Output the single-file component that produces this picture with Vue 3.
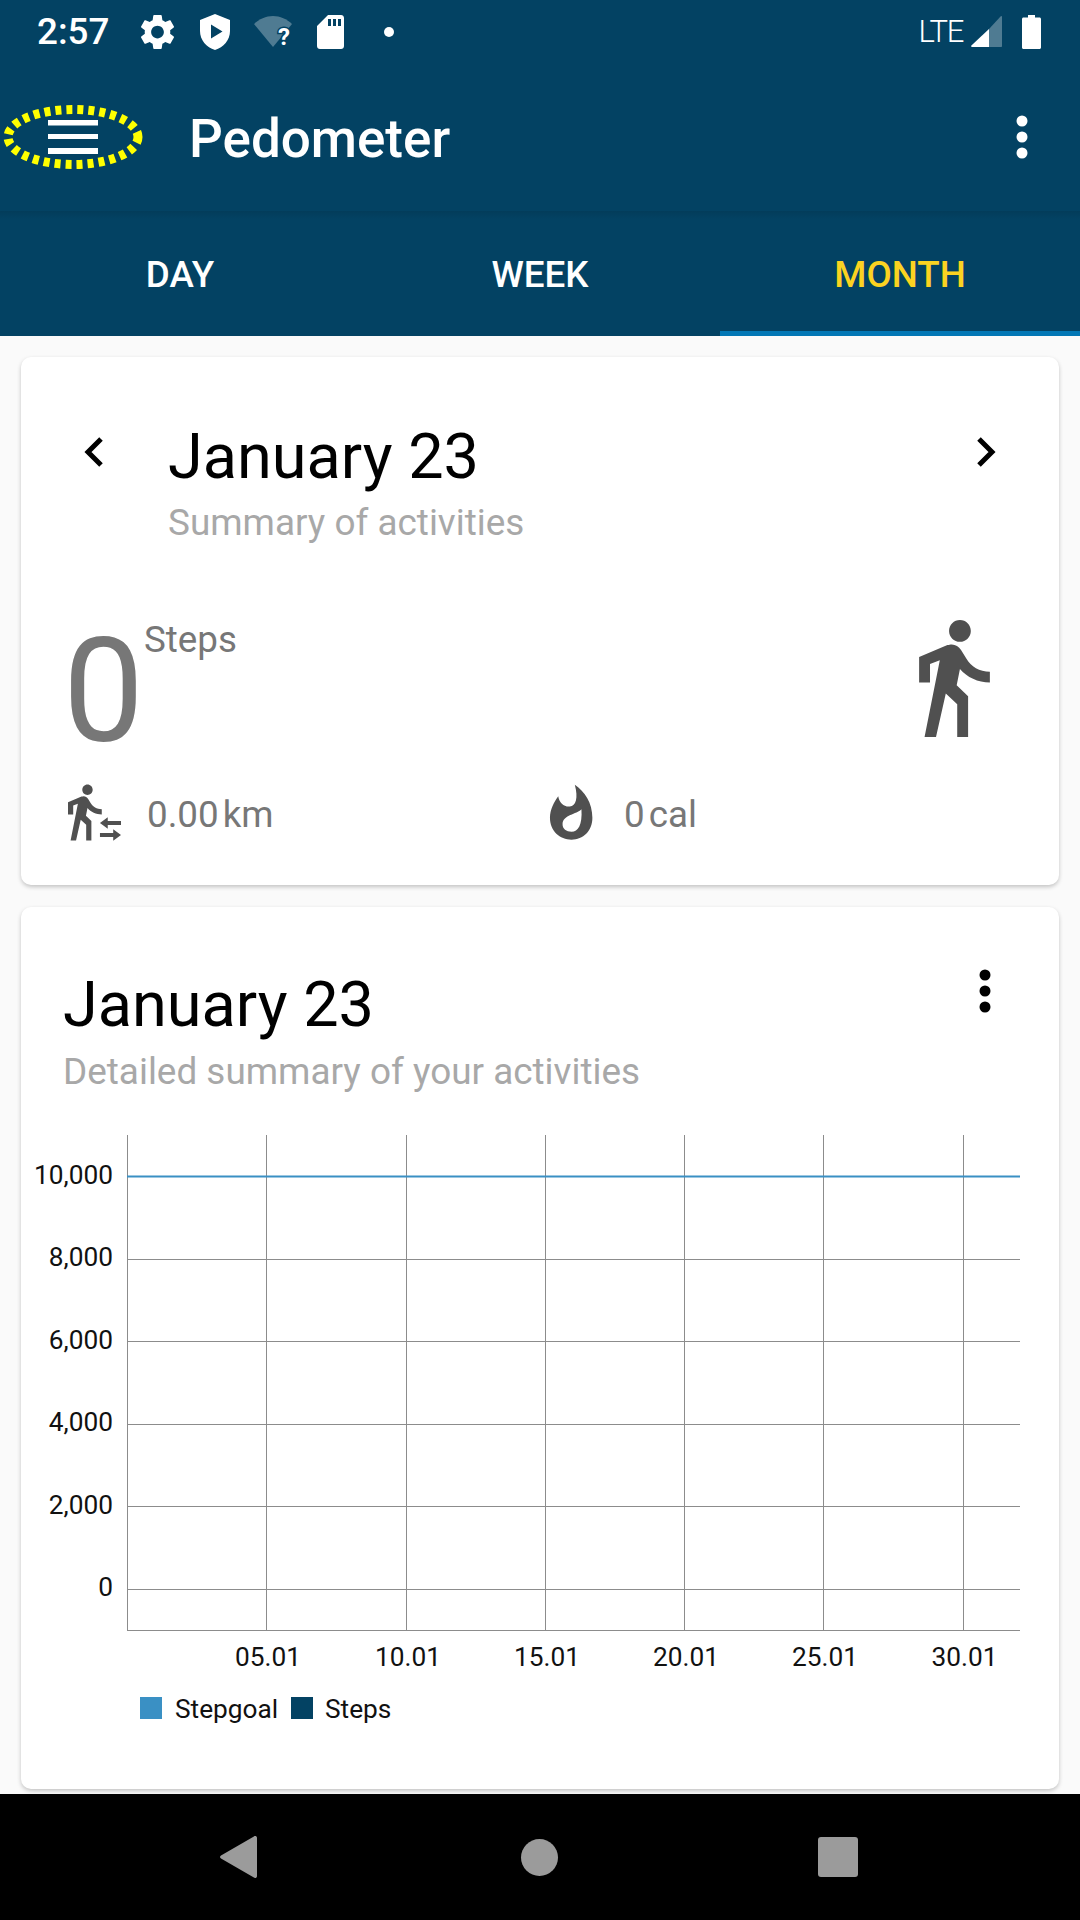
<script setup>
const tabs = [
  { label: 'DAY', active: false },
  { label: 'WEEK', active: false },
  { label: 'MONTH', active: true },
]

const gridX = [266.5, 406.5, 545.5, 684.5, 823.5, 963]
const gridY = [1259, 1341, 1424, 1506, 1589]
const yLabels = [
  { text: '10,000', y: 1184 },
  { text: '8,000', y: 1266 },
  { text: '6,000', y: 1349 },
  { text: '4,000', y: 1431 },
  { text: '2,000', y: 1514 },
  { text: '0', y: 1596 },
]
const xLabels = ['05.01', '10.01', '15.01', '20.01', '25.01', '30.01']

// chart svg starts at y=1125 on the page and x=21 (card left)
const ox = 21
const oy = 1125

const walk = 'M13.5 5.5c1.1 0 2-.9 2-2s-.9-2-2-2-2 .9-2 2 .9 2 2 2zM9.8 8.9L7 23h2.1l1.8-8 2.1 2v6h2v-7.5l-2.1-2 .6-3C14.8 12 16.8 13 19 13v-2c-1.9 0-3.5-1-4.3-2.4l-1-1.6c-.4-.6-1-1-1.7-1-.3 0-.5.1-.8.1L6 8.3V13h2V9.6l1.8-.7'
</script>

<template>
  <div class="screen">
    <header class="appbar">
      <div class="status">
        <span class="time">2:57</span>
        <svg class="st-gear" viewBox="2.7 2.4 18.6 19.2" fill="#fff"><path d="M19.14,12.94c0.04-0.3,0.06-0.61,0.06-0.94c0-0.32-0.02-0.64-0.07-0.94l2.03-1.58c0.18-0.14,0.23-0.41,0.12-0.61 l-1.92-3.32c-0.12-0.22-0.37-0.29-0.59-0.22l-2.39,0.96c-0.5-0.38-1.03-0.7-1.62-0.94L14.4,2.81c-0.04-0.24-0.24-0.41-0.48-0.41 h-3.84c-0.24,0-0.43,0.17-0.47,0.41L9.25,5.35C8.66,5.59,8.12,5.92,7.63,6.29L5.24,5.33c-0.22-0.08-0.47,0-0.59,0.22L2.74,8.87 C2.62,9.08,2.66,9.34,2.86,9.48l2.03,1.58C4.84,11.36,4.8,11.69,4.8,12s0.02,0.64,0.07,0.94l-2.03,1.58 c-0.18,0.14-0.23,0.41-0.12,0.61l1.92,3.32c0.12,0.22,0.37,0.29,0.59,0.22l2.39-0.96c0.5,0.38,1.03,0.7,1.62,0.94l0.36,2.54 c0.05,0.24,0.24,0.41,0.48,0.41h3.84c0.24,0,0.44-0.17,0.47-0.41l0.36-2.54c0.59-0.24,1.13-0.56,1.62-0.94l2.39,0.96 c0.22,0.08,0.47,0,0.59-0.22l1.92-3.32c0.12-0.22,0.07-0.47-0.12-0.61L19.14,12.94z M12,15.6c-1.98,0-3.6-1.62-3.6-3.6 s1.62-3.6,3.6-3.6s3.6,1.62,3.6,3.6S13.98,15.6,12,15.6z" /></svg>
        <svg class="st-shield" viewBox="0 0 30 36"><path fill="#fff" fill-rule="evenodd" d="M15 0L0 6v11c0 9 6.5 16.5 15 19 8.5-2.5 15-10 15-19V6zM11 10.5L22.500 17.500 11 24.500z" /></svg>
        <svg class="st-wifi" viewBox="0 -4 44 40">
          <path fill="#fff" fill-opacity=".3" d="M0 8C5 3 12 0 19 0s14 3 19 8L19 31z" />
          <text x="30" y="29" class="st-q">?</text>
        </svg>
        <svg class="st-sd" viewBox="0 0 27 34"><path fill="#fff" fill-rule="evenodd" d="M11 0h13c1.700 0 3 1.300 3 3v28c0 1.700-1.300 3-3 3H3c-1.700 0-3-1.300-3-3V11zM11 4v7h3V4zM16 4v7h3V4zM21 4v7h3V4z" /></svg>
        <span class="st-dot"></span>
        <span class="st-space"></span>
        <span class="lte">LTE</span>
        <svg class="st-signal" viewBox="0 0 31 31">
          <path fill="#fff" fill-opacity=".3" d="M18 13L30 0c.5 0 1 .4 1 1v29c0 .6-.4 1-1 1H18z" />
          <path fill="#fff" d="M18 13V31H1c-.8 0-1.200-.8-.6-1.400z" />
        </svg>
        <svg class="st-battery" viewBox="0 0 19 34"><path fill="#fff" d="M6 0h7v2.500h4.500c.8 0 1.500.7 1.500 1.500v28.500c0 .8-.7 1.500-1.500 1.500H1.500C.7 34 0 33.300 0 32.500V4c0-.8.7-1.500 1.500-1.500H6z" /></svg>
      </div>

      <div class="toolbar">
        <svg class="menu" viewBox="0 0 140 68">
          <ellipse cx="70" cy="34" rx="65" ry="27.500" fill="none" stroke="#ffff00" stroke-width="9" stroke-dasharray="6 5" />
          <rect x="45" y="17" width="50" height="5.500" fill="#fff" />
          <rect x="45" y="31" width="50" height="5" fill="#fff" />
          <rect x="45" y="45" width="50" height="6" fill="#fff" />
        </svg>
        <h1 class="app-title">Pedometer</h1>
        <svg class="overflow" viewBox="0 0 12 44" fill="#fff">
          <circle cx="6" cy="6" r="5.500" />
          <circle cx="6" cy="22" r="5.500" />
          <circle cx="6" cy="38" r="5.500" />
        </svg>
      </div>

      <nav class="tabs">
        <div v-for="tab in tabs" :key="tab.label" class="tab" :class="{ active: tab.active }">{{ tab.label }}</div>
      </nav>
    </header>

    <main class="content">
      <section class="card card-summary">
        <div class="sum-head">
          <svg class="chev" viewBox="0 0 22 32"><path d="M18 3L5 16l13 13" fill="none" stroke="#000" stroke-width="5" /></svg>
          <div class="sum-titles">
            <div class="title">January 23</div>
            <div class="subtitle">Summary of activities</div>
          </div>
          <svg class="chev" viewBox="0 0 22 32"><path d="M4 3l13 13L4 29" fill="none" stroke="#000" stroke-width="5" /></svg>
        </div>

        <div class="sum-steps">
          <span class="big-num">0</span>
          <span class="steps-label">Steps</span>
          <svg class="walk-big" viewBox="6 1.500 13 21.500"><path :d="walk" fill="#505050" /></svg>
        </div>

        <div class="sum-details">
          <div class="detail detail-km">
            <svg class="walk-small" viewBox="6 1.500 20.400 21.500">
              <path :d="walk" fill="#505050" />
              <path fill="#505050" d="M18.300 16.300L21.300 14.100V15.500H26.400V17.100H21.300V18.500zM26.400 20.900L23.400 18.700V20.100H18.300V21.700H23.400V23.100z" />
            </svg>
            <span class="value">0.00</span><span class="unit">km</span>
          </div>
          <div class="detail detail-cal">
            <svg class="flame" viewBox="85 545 140 175">
              <path fill="#505050" fill-rule="evenodd" d="M165 550C195 570 218 605 218 650C218 690 190 716 155 716C120 716 90 690 90 650C90 625 102 603 115 585C118 605 133 618 150 616C168 614 176 590 165 550ZM185 624C170 640 130 640 128 668C127 684 140 692 155 692C175 692 188 672 185 624Z" />
            </svg>
            <span class="value">0</span><span class="unit">cal</span>
          </div>
        </div>
      </section>

      <section class="card card-chart">
        <div class="chart-head">
          <div>
            <div class="title">January 23</div>
            <div class="subtitle">Detailed summary of your activities</div>
          </div>
          <svg class="chart-more" viewBox="0 0 12 44" fill="#000">
            <circle cx="6" cy="6" r="5.500" />
            <circle cx="6" cy="22" r="5.500" />
            <circle cx="6" cy="38" r="5.500" />
          </svg>
        </div>

        <svg class="chart" width="1038" height="610" :viewBox="`${ox} ${oy} 1038 610`">
          <g stroke="#8c8c8c" stroke-width="1" shape-rendering="crispEdges">
            <line v-for="x in gridX" :key="x" :x1="x" :x2="x" y1="1135" y2="1630" />
            <line v-for="y in gridY" :key="y" x1="127" x2="1020" :y1="y" :y2="y" />
            <line x1="127" x2="127" y1="1135" y2="1630" />
            <line x1="127" x2="1020" y1="1630" y2="1630" />
          </g>
          <line x1="127" x2="1020" y1="1176.500" y2="1176.500" stroke="#3a90c4" stroke-width="2" />
          <text v-for="l in yLabels" :key="l.text" class="axis" x="113" :y="l.y" text-anchor="end">{{ l.text }}</text>
          <text v-for="(l, i) in xLabels" :key="l" class="axis" :x="gridX[i] + 1.500" y="1666" text-anchor="middle">{{ l }}</text>
          <rect x="140" y="1697" width="22" height="22" fill="#3a90c4" />
          <text class="axis" x="175" y="1718">Stepgoal</text>
          <rect x="291" y="1697" width="22" height="22" fill="#034263" />
          <text class="axis" x="325" y="1718">Steps</text>
        </svg>
      </section>
    </main>

    <footer class="navbar">
      <svg class="nav-back" viewBox="0 0 37 42"><path d="M35 0c1 0 2 .6 2 2v38c0 1.400-1 2-2 2-.4 0-.8-.2-1.100-.4L1 22.500c-1.300-.8-1.300-2.200 0-3L33.900.4C34.200.2 34.600 0 35 0z" fill="#9b9b9b" /></svg>
      <span class="nav-home"></span>
      <span class="nav-recent"></span>
    </footer>
  </div>
</template>

<style scoped>
.screen {
  width: 1080px;
  height: 1920px;
  display: flex;
  flex-direction: column;
  background: #fafafa;
  font-family: Roboto, "Liberation Sans", sans-serif;
  overflow: hidden;
}
.appbar {
  height: 336px;
  flex: none;
  background: #034263;
  color: #fff;
}
.status {
  height: 63px;
  display: flex;
  align-items: center;
  padding: 0 39px 0 37px;
}
.time {
  width: 73px;
  font-size: 36.75px;
  font-weight: 500;
  line-height: 63px;
}
.st-gear {
  width: 33px;
  height: 34px;
  margin-left: 31px;
}
.st-shield {
  width: 30px;
  height: 36px;
  margin-left: 26px;
}
.st-wifi {
  width: 44px;
  height: 40px;
  margin: 0 -6px 0 24px;
}
.st-q {
  font-size: 24px;
  font-weight: 700;
  fill: #fff;
  text-anchor: middle;
  stroke: #034263;
  stroke-width: 3px;
  paint-order: stroke;
}
.st-sd {
  width: 27px;
  height: 34px;
  margin-left: 25px;
}
.st-dot {
  width: 10px;
  height: 10px;
  border-radius: 50%;
  background: #fff;
  margin-left: 40px;
}
.st-space {
  flex: 1;
}
.lte {
  font-size: 31px;
  font-weight: 300;
  letter-spacing: -1.3px;
  margin-right: 8px;
}
.st-signal {
  width: 31px;
  height: 31px;
}
.st-battery {
  width: 19px;
  height: 34px;
  margin-left: 20px;
}
.toolbar {
  height: 148px;
  display: flex;
  align-items: center;
  padding: 0 52px 0 3px;
}
.menu {
  width: 140px;
  height: 68px;
  flex: none;
}
.app-title {
  flex: 1;
  margin: 4px 0 0 46px;
  font-size: 53px;
  font-weight: 500;
  line-height: 60px;
}
.overflow {
  width: 12px;
  height: 44px;
}
.tabs {
  height: 125px;
  display: flex;
  background: linear-gradient(#033c5a, #034263 8px);
}
.tab {
  flex: 1;
  display: flex;
  align-items: center;
  justify-content: center;
  padding-top: 6px;
  border-bottom: 5px solid transparent;
  font-size: 36.75px;
  font-weight: 500;
}
.tab.active {
  color: #fbd321;
  border-bottom-color: #0277b5;
}
.content {
  flex: 1;
  display: flex;
  flex-direction: column;
  gap: 22px;
  padding: 21px 21px 0;
}
.card {
  background: #fff;
  border-radius: 10px;
  box-shadow: 0 2px 4px rgba(0, 0, 0, 0.22);
}
.card-summary {
  height: 528px;
  padding: 0 50px 0 44px;
  box-sizing: border-box;
}
.sum-head {
  display: flex;
  align-items: flex-start;
  padding: 64px 12px 0 18px;
}
.chev {
  width: 22px;
  height: 32px;
  margin-top: 15px;
  flex: none;
}
.sum-titles {
  flex: 1;
  margin-left: 63px;
}
.title {
  font-size: 63px;
  line-height: 72px;
  color: #000;
}
.subtitle {
  margin-top: 6px;
  font-size: 36.9px;
  line-height: 50px;
  color: #a8a8a8;
}
.sum-titles .subtitle {
  margin-top: 5px;
}
.sum-steps {
  display: flex;
  align-items: flex-start;
  margin-top: 61px;
  height: 170px;
  margin-left: -2px;
}
.big-num {
  font-size: 144px;
  line-height: 166px;
  color: #777;
}
.steps-label {
  flex: 1;
  font-size: 36.75px;
  line-height: 44px;
  color: #777;
  margin: 9px 0 0 0;
}
.walk-big {
  width: 71px;
  height: 117px;
  margin: 11px 19px 0 0;
}
.sum-details {
  display: flex;
  margin-top: 5px;
  margin-left: 3px;
}
.detail {
  display: flex;
  align-items: center;
  height: 60px;
  font-size: 36.75px;
  color: #777;
}
.detail-km {
  width: 480px;
}
.walk-small {
  width: 53px;
  height: 57px;
  margin: -4px 26px 0 0;
}
.flame {
  width: 47px;
  height: 58px;
  margin: -4px 29px 0 0;
}
.value {
  margin-right: 4px;
}
.card-chart {
  height: 882px;
  box-sizing: border-box;
}
.chart-head {
  display: flex;
  justify-content: space-between;
  align-items: flex-start;
  height: 185px;
  box-sizing: border-box;
  padding: 62px 68px 0 42px;
}
.chart-more {
  width: 12px;
  height: 44px;
  margin-top: 0;
}
.chart {
  display: block;
  margin-top: 33px;
}
.axis {
  font-size: 26.25px;
  fill: #111;
}
.navbar {
  height: 126px;
  flex: none;
  margin-top: -1px;
  background: #000;
  display: flex;
  align-items: center;
  padding: 0 222px 0 220px;
  justify-content: space-between;
}
.nav-back {
  width: 37px;
  height: 42px;
}
.nav-home {
  width: 37px;
  height: 37px;
  margin-left: 4px;
  border-radius: 50%;
  background: #9b9b9b;
}
.nav-recent {
  width: 40px;
  height: 40px;
  border-radius: 3px;
  background: #9b9b9b;
}
</style>

<style>
html,
body {
  margin: 0;
  background: #fafafa;
}
</style>
